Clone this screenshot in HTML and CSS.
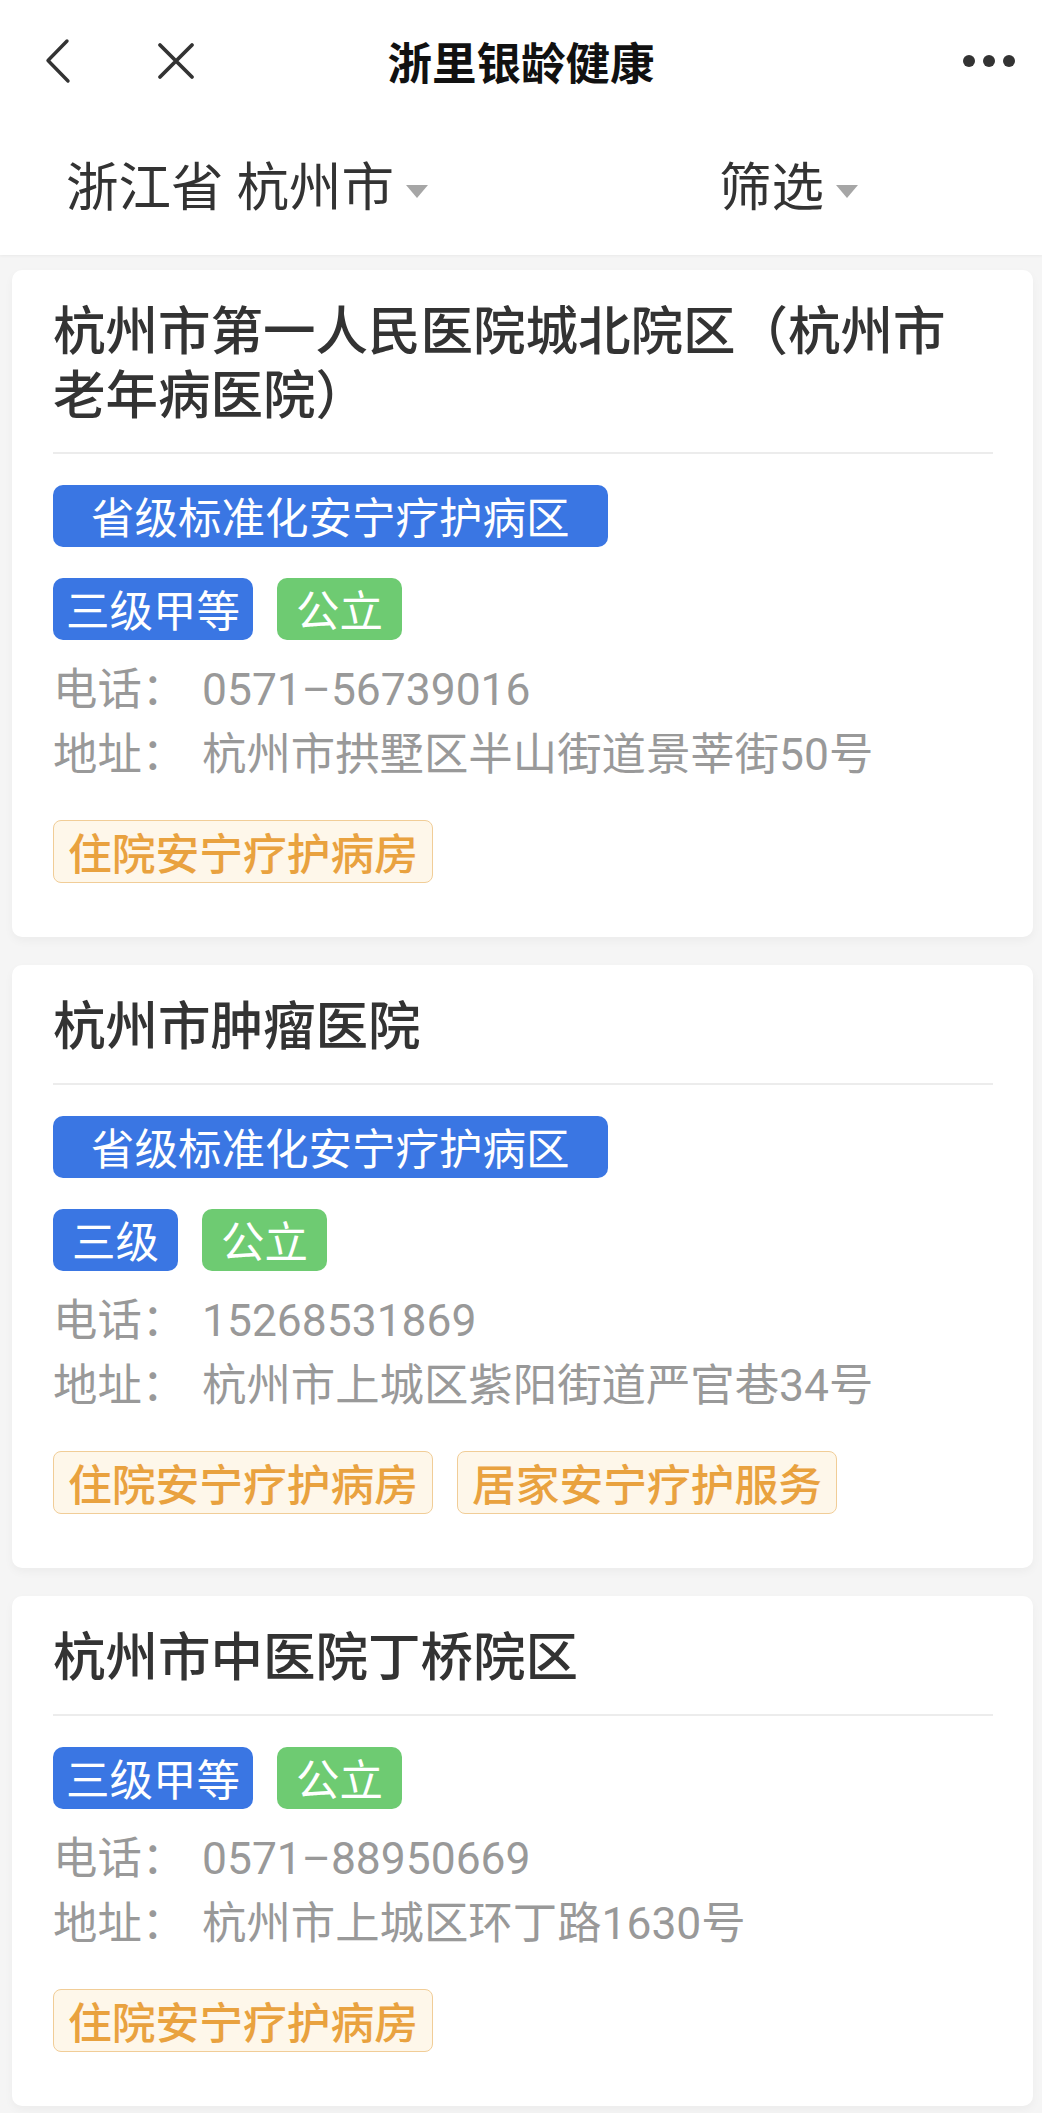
FILE: index.html
```html
<!DOCTYPE html>
<html lang="zh-CN">
<head>
<meta charset="utf-8">
<title>浙里银龄健康</title>
<link rel="stylesheet" href="styles.css">
</head>
<body>
<header class="header">
  <div class="nav">
    <div class="nav-left">
      <svg class="icon-back" viewBox="0 0 28 46" aria-hidden="true"><polyline points="23,3 4,22.5 24,43" fill="none" stroke="#333" stroke-width="3.4" stroke-linecap="round" stroke-linejoin="round"/></svg>
      <svg class="icon-close" viewBox="0 0 44 44" aria-hidden="true"><path d="M6 6 L38 38 M38 6 L6 38" fill="none" stroke="#333" stroke-width="3.8" stroke-linecap="round"/></svg>
    </div>
    <div class="nav-title">浙里银龄健康</div>
    <div class="nav-right">
      <svg class="icon-more" viewBox="0 0 60 16" aria-hidden="true"><circle cx="6" cy="8" r="6" fill="#333"/><circle cx="26" cy="8" r="6" fill="#333"/><circle cx="46" cy="8" r="6" fill="#333"/></svg>
    </div>
  </div>
  <div class="filters">
    <div class="filter filter-region">浙江省 杭州市<span class="caret"></span></div>
    <div class="filter filter-more">筛选<span class="caret"></span></div>
  </div>
</header>

<main class="list">
  <section class="card">
    <h2 class="card-title">杭州市第一人民医院城北院区（杭州市老年病医院）</h2>
    <div class="divider"></div>
    <div class="badges">
      <div class="badge-row"><span class="badge badge-blue badge-wide">省级标准化安宁疗护病区</span></div>
      <div class="badge-row"><span class="badge badge-blue">三级甲等</span><span class="badge badge-green">公立</span></div>
    </div>
    <div class="info">
      <div class="info-row"><span class="info-label">电话：</span><span class="info-value">0571–56739016</span></div>
      <div class="info-row"><span class="info-label">地址：</span><span class="info-value">杭州市拱墅区半山街道景莘街50号</span></div>
    </div>
    <div class="services"><span class="service">住院安宁疗护病房</span></div>
  </section>

  <section class="card">
    <h2 class="card-title">杭州市肿瘤医院</h2>
    <div class="divider"></div>
    <div class="badges">
      <div class="badge-row"><span class="badge badge-blue badge-wide">省级标准化安宁疗护病区</span></div>
      <div class="badge-row"><span class="badge badge-blue">三级</span><span class="badge badge-green">公立</span></div>
    </div>
    <div class="info">
      <div class="info-row"><span class="info-label">电话：</span><span class="info-value">15268531869</span></div>
      <div class="info-row"><span class="info-label">地址：</span><span class="info-value">杭州市上城区紫阳街道严官巷34号</span></div>
    </div>
    <div class="services"><span class="service">住院安宁疗护病房</span><span class="service">居家安宁疗护服务</span></div>
  </section>

  <section class="card">
    <h2 class="card-title">杭州市中医院丁桥院区</h2>
    <div class="divider"></div>
    <div class="badges">
      <div class="badge-row"><span class="badge badge-blue">三级甲等</span><span class="badge badge-green">公立</span></div>
    </div>
    <div class="info">
      <div class="info-row"><span class="info-label">电话：</span><span class="info-value">0571–88950669</span></div>
      <div class="info-row"><span class="info-label">地址：</span><span class="info-value">杭州市上城区环丁路1630号</span></div>
    </div>
    <div class="services"><span class="service">住院安宁疗护病房</span></div>
  </section>
</main>
</body>
</html>
```

FILE: styles.css
```css
html, body {
  margin: 0;
  padding: 0;
}

body {
  background: #f5f5f5;
  font-family: Roboto, "Noto Sans CJK SC", sans-serif;
  color: #333;
}

.header {
  background: #fff;
  height: 255px;
  box-shadow: 0 1px 3px rgba(0, 0, 0, 0.05);
}

.nav {
  height: 122px;
  display: grid;
  grid-template-columns: 1fr auto 1fr;
  align-items: center;
}

.nav-left {
  display: flex;
  align-items: center;
  padding-left: 44px;
  gap: 82px;
}

.icon-back {
  width: 28px;
  height: 46px;
  display: block;
}

.icon-close {
  width: 44px;
  height: 44px;
  display: block;
}

.nav-title {
  font-family: "Noto Sans CJK SC", sans-serif;
  font-weight: 700;
  font-size: 44.5px;
  line-height: 1;
  color: #111;
}

.nav-right {
  display: flex;
  justify-content: flex-end;
  padding-right: 19px;
}

.icon-more {
  width: 60px;
  height: 16px;
  display: block;
}

.filters {
  height: 133px;
  display: grid;
  grid-template-columns: 1fr 1fr;
  align-items: center;
}

.filter {
  display: flex;
  align-items: center;
  font-size: 52.5px;
  line-height: 1;
  color: #333;
}

.filter-region {
  padding-left: 66px;
}

.filter-more {
  justify-content: center;
  padding-left: 14px;
}

.caret {
  width: 0;
  height: 0;
  border-left: 11px solid transparent;
  border-right: 11px solid transparent;
  border-top: 13px solid #a6a6a6;
  margin-left: 12px;
  margin-top: 6px;
}

.list {
  padding: 15px 9px 0 12px;
}

.card {
  background: #fff;
  border-radius: 10px;
  padding: 25px 40px 54px 41px;
  margin-bottom: 28px;
  box-shadow: 0 4px 10px rgba(0, 0, 0, 0.04);
}

.card-title {
  margin: 0;
  font-family: "Noto Sans CJK SC", sans-serif;
  font-weight: 500;
  font-size: 52.5px;
  line-height: 64px;
  color: #333;
}

.divider {
  height: 2px;
  background: #ececec;
  margin-top: 29px;
}

.badges {
  margin-top: 31px;
  display: flex;
  flex-direction: column;
  gap: 31px;
}

.badge-row {
  display: flex;
  gap: 24px;
}

.badge {
  box-sizing: border-box;
  height: 62px;
  line-height: 62px;
  min-width: 125px;
  padding: 0 13px;
  border-radius: 10px;
  color: #fff;
  font-family: "Noto Sans CJK SC", sans-serif;
  font-size: 43.5px;
  text-align: center;
}

.badge-wide {
  padding: 0 38px;
}

.badge-blue {
  background: #3a76e3;
}

.badge-green {
  background: #6ecb72;
}

.info {
  margin-top: 18px;
}

.info-row {
  display: flex;
  height: 65px;
  line-height: 65px;
  font-size: 44.4px;
  color: #999;
}

.info-label {
  width: 149px;
  flex: none;
}

.services {
  margin-top: 32px;
  display: flex;
  gap: 24px;
}

.service {
  box-sizing: border-box;
  height: 63px;
  line-height: 61px;
  padding: 0 14px;
  border: 1px solid #f1cd97;
  background: #fef7ea;
  color: #e9a23f;
  border-radius: 8px;
  font-family: "Noto Sans CJK SC", sans-serif;
  font-size: 43.75px;
  font-weight: 500;
}
```
